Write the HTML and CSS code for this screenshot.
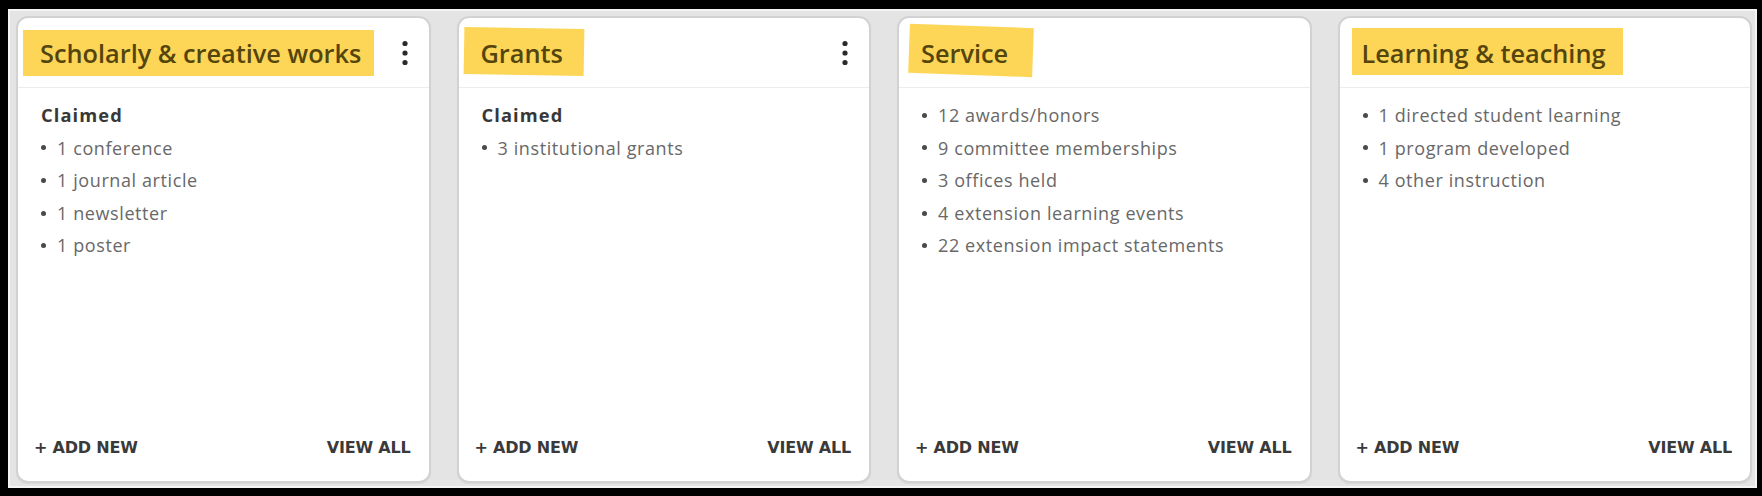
FILE: index.html
```html
<!DOCTYPE html>
<html lang="en">
<head>
<meta charset="utf-8">
<title>Activity cards</title>
<link rel="stylesheet" href="styles.css">
</head>
<body>
<div class="frame">
  <section class="card">
    <header class="card-head">
      <h2 class="title title--scholarly">Scholarly &amp; creative works</h2>
      <button class="kebab" aria-label="More options">
        <svg width="6" height="26" viewBox="0 0 6 26"><circle cx="3" cy="3.5" r="2.6"/><circle cx="3" cy="13" r="2.6"/><circle cx="3" cy="22.5" r="2.6"/></svg>
      </button>
    </header>
    <div class="card-body">
      <div class="group-label">Claimed</div>
      <ul class="items">
        <li>1 conference</li>
        <li>1 journal article</li>
        <li>1 newsletter</li>
        <li>1 poster</li>
      </ul>
    </div>
    <footer class="card-foot"><a class="action">+ ADD NEW</a><a class="action">VIEW ALL</a></footer>
  </section>

  <section class="card">
    <header class="card-head">
      <h2 class="title title--grants">Grants</h2>
      <button class="kebab" aria-label="More options">
        <svg width="6" height="26" viewBox="0 0 6 26"><circle cx="3" cy="3.5" r="2.6"/><circle cx="3" cy="13" r="2.6"/><circle cx="3" cy="22.5" r="2.6"/></svg>
      </button>
    </header>
    <div class="card-body">
      <div class="group-label">Claimed</div>
      <ul class="items">
        <li>3 institutional grants</li>
      </ul>
    </div>
    <footer class="card-foot"><a class="action">+ ADD NEW</a><a class="action">VIEW ALL</a></footer>
  </section>

  <section class="card">
    <header class="card-head">
      <h2 class="title title--service">Service</h2>
    </header>
    <div class="card-body">
      <ul class="items">
        <li>12 awards/honors</li>
        <li>9 committee memberships</li>
        <li>3 offices held</li>
        <li>4 extension learning events</li>
        <li>22 extension impact statements</li>
      </ul>
    </div>
    <footer class="card-foot"><a class="action">+ ADD NEW</a><a class="action">VIEW ALL</a></footer>
  </section>

  <section class="card">
    <header class="card-head">
      <h2 class="title title--learning">Learning &amp; teaching</h2>
    </header>
    <div class="card-body">
      <ul class="items">
        <li>1 directed student learning</li>
        <li>1 program developed</li>
        <li>4 other instruction</li>
      </ul>
    </div>
    <footer class="card-foot"><a class="action">+ ADD NEW</a><a class="action">VIEW ALL</a></footer>
  </section>
</div>
</body>
</html>
```

FILE: styles.css
```css
html, body {
  margin: 0;
  padding: 0;
  background: #000;
  height: 100%;
}

body {
  font-family: "Open Sans", "Liberation Sans", sans-serif;
}

.frame {
  box-sizing: border-box;
  margin: 9px 5px 0 8px;
  height: 479px;
  border: 2px solid #f4f4f4;
  background: #e4e4e4;
  padding: 5px 3px 3px 6px;
  display: flex;
  gap: 26px;
}

.card {
  flex: 1 1 0;
  min-width: 0;
  box-sizing: border-box;
  background: #fff;
  border: 2px solid #d2d2d2;
  border-radius: 12px;
  display: flex;
  flex-direction: column;
  box-shadow: 0 1px 1px rgba(0,0,0,0.06);
}

.card-head {
  box-sizing: border-box;
  height: 70px;
  border-bottom: 1px solid #ececec;
  display: flex;
  align-items: center;
  justify-content: space-between;
  padding: 0 21px 0 22px;
}

.title {
  margin: 0;
  position: relative;
  z-index: 0;
  font-size: 25.3px;
  line-height: 34px;
  font-weight: 600;
  color: #54450c;
  white-space: nowrap;
}

.title::before {
  content: "";
  position: absolute;
  z-index: -1;
  background: #fdd657;
  top: -6px;
  bottom: -6px;
  left: -17px;
  right: -13px;
}

.title--grants::before {
  top: -8px;
  bottom: -5px;
  left: -17px;
  right: -21px;
  transform: rotate(1deg);
}

.title--service::before {
  top: -10px;
  bottom: -5px;
  left: -12px;
  right: -25px;
  transform: rotate(2deg);
}

.title--learning::before {
  top: -8px;
  bottom: -5px;
  left: -10px;
  right: -17px;
}

.kebab {
  border: 0;
  background: none;
  padding: 0;
  width: 6px;
  height: 26px;
  display: flex;
  fill: #2a2a2a;
}

.card-body {
  padding: 11px 20px 0 23px;
}

.group-label {
  font-size: 18.3px;
  line-height: 32.6px;
  font-weight: 700;
  color: #383838;
  letter-spacing: 1.1px;
}

.items {
  list-style: none;
  margin: 0;
  padding: 0;
}

.items li {
  display: flex;
  align-items: center;
  gap: 11px;
  font-size: 18px;
  line-height: 32.6px;
  color: #686868;
  letter-spacing: 0.6px;
  white-space: nowrap;
}

.items li::before {
  content: "";
  width: 5px;
  height: 5px;
  border-radius: 50%;
  background: #4a4a4a;
  flex: none;
}

.card-foot {
  margin-top: auto;
  display: flex;
  justify-content: space-between;
  padding: 0 18px 23px 16px;
}

.action {
  font-family: "DejaVu Sans", "Liberation Sans", sans-serif;
  font-weight: 700;
  font-size: 16px;
  line-height: 20px;
  color: #3a3a3a;
  letter-spacing: -0.2px;
}
```
